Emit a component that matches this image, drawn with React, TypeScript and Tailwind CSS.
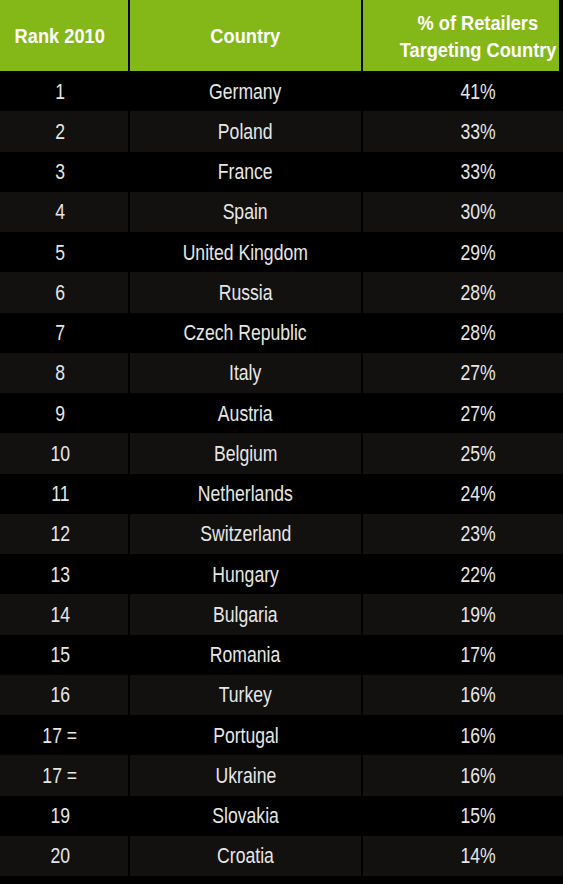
import React from 'react';

const rows: [string, string, string][] = [
  ['1', 'Germany', '41%'],
  ['2', 'Poland', '33%'],
  ['3', 'France', '33%'],
  ['4', 'Spain', '30%'],
  ['5', 'United Kingdom', '29%'],
  ['6', 'Russia', '28%'],
  ['7', 'Czech Republic', '28%'],
  ['8', 'Italy', '27%'],
  ['9', 'Austria', '27%'],
  ['10', 'Belgium', '25%'],
  ['11', 'Netherlands', '24%'],
  ['12', 'Switzerland', '23%'],
  ['13', 'Hungary', '22%'],
  ['14', 'Bulgaria', '19%'],
  ['15', 'Romania', '17%'],
  ['16', 'Turkey', '16%'],
  ['17 =', 'Portugal', '16%'],
  ['17 =', 'Ukraine', '16%'],
  ['19', 'Slovakia', '15%'],
  ['20', 'Croatia', '14%'],
];

// condensed look: no narrow font installed, so squeeze horizontally
const Narrow = ({ children, head }: { children: React.ReactNode; head?: boolean }) => (
  <span className={`inline-block whitespace-nowrap ${head ? 'scale-x-[0.89]' : 'scale-x-[0.8]'}`}>{children}</span>
);

export default function App() {
  return (
    <div className="w-[563px] h-[884px] bg-black overflow-hidden font-['Liberation_Sans',Arial,sans-serif]">
      {/* Header */}
      <div className="flex h-[71px] gap-[2px] pr-[4px] text-white font-bold text-[20.5px] leading-[27px]">
        <div className="w-[128px] shrink-0 bg-[#84b819] flex items-center justify-center pr-[8px]">
          <Narrow head>Rank 2010</Narrow>
        </div>
        <div className="w-[231px] shrink-0 bg-[#84b819] flex items-center justify-center">
          <Narrow head>Country</Narrow>
        </div>
        <div className="flex-1 min-w-0 bg-[#84b819] flex flex-col items-center justify-center pl-[34px] text-center">
          <Narrow head>% of Retailers</Narrow>
          <Narrow head>Targeting Country</Narrow>
        </div>
      </div>

      {/* Body */}
      <div className="flex flex-col h-[805px] text-[22px] text-[#e6e6e6]">
        {rows.map(([rank, country, pct], i) => {
          const cell = i % 2 === 1 ? 'bg-[#121110]' : 'bg-black';
          return (
            <div key={i} className="flex flex-1 gap-[2px]">
              <div className={`w-[128px] shrink-0 ${cell} flex items-center justify-center pr-[8px]`}>
                <Narrow>{rank}</Narrow>
              </div>
              <div className={`w-[231px] shrink-0 ${cell} flex items-center justify-center`}>
                <Narrow>{country}</Narrow>
              </div>
              <div className={`flex-1 min-w-0 ${cell} flex items-center justify-center pl-[30px]`}>
                <Narrow>{pct}</Narrow>
              </div>
            </div>
          );
        })}
      </div>
    </div>
  );
}
